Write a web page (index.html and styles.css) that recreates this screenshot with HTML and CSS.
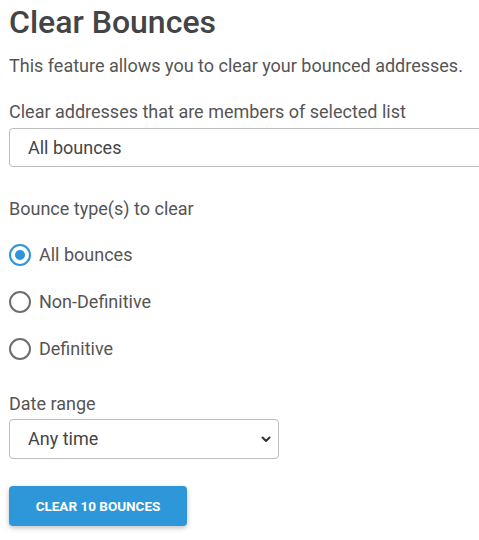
FILE: index.html
```html
<!DOCTYPE html>
<html lang="en">
<head>
<meta charset="utf-8">
<title>Clear Bounces</title>
<link rel="stylesheet" href="styles.css">
</head>
<body>
<div class="page">
  <h1 class="title">Clear Bounces</h1>
  <p class="intro">This feature allows you to clear your bounced addresses.</p>

  <label class="field-label label-list" for="list">Clear addresses that are members of selected list</label>
  <div class="select-wrap select-wide">
    <select id="list" class="select">
      <option>All bounces</option>
    </select>
  </div>

  <div class="field-label label-type">Bounce type(s) to clear</div>
  <div class="radios">
    <label class="radio-row"><input type="radio" name="type" class="radio" checked><span>All bounces</span></label>
    <label class="radio-row"><input type="radio" name="type" class="radio"><span>Non-Definitive</span></label>
    <label class="radio-row"><input type="radio" name="type" class="radio"><span>Definitive</span></label>
  </div>

  <label class="field-label label-date" for="date">Date range</label>
  <div class="select-wrap select-date">
    <select id="date" class="select">
      <option>Any time</option>
    </select>
    <svg class="chevron" width="10" height="7" viewBox="0 0 10 7"><path d="M1.5 1.5 L5 5 L8.5 1.5" fill="none" stroke="#333" stroke-width="2" stroke-linecap="round" stroke-linejoin="round"/></svg>
  </div>

  <button class="btn" type="button">Clear 10 bounces</button>
</div>
</body>
</html>
```

FILE: styles.css
```css
html, body {
  margin: 0;
  padding: 0;
  background: #fff;
}
body {
  font-family: Roboto, "Liberation Sans", Arial, sans-serif;
  color: #555;
  font-size: 18px;
  line-height: 24px;
}
.page {
  overflow: hidden;
  padding-left: 9px;
  padding-bottom: 20px;
}
.title {
  margin: 2px 0 0;
  font-size: 32px;
  line-height: 40px;
  font-weight: 500;
  color: #444;
}
.intro {
  margin: 12px 0 0;
}
.field-label {
  display: block;
}
.label-list { margin-top: 21.5px; }
.label-type { margin-top: 30px; }
.label-date { margin-top: 30.5px; }

.select-wrap {
  position: relative;
}
.select-wide {
  margin-top: 4px;
  width: 520px;
}
.select-date {
  margin-top: 3px;
  width: 270px;
}
.select {
  -webkit-appearance: none;
  appearance: none;
  display: block;
  width: 100%;
  box-sizing: border-box;
  border: 1px solid #bdbdbd;
  border-radius: 4px;
  background: #fff;
  font-family: inherit;
  font-size: 18px;
  color: #444;
  padding: 0 18px;
  outline: none;
}
.select-wide .select { height: 39px; }
.select-date .select { height: 40px; }
.chevron {
  position: absolute;
  right: 8px;
  top: 17px;
}

.radios {
  margin-top: 22.5px;
  display: flex;
  flex-direction: column;
  gap: 23px;
}
.radio-row {
  display: flex;
  align-items: center;
  gap: 8px;
  height: 24px;
  color: #555;
}
.radio {
  -webkit-appearance: none;
  appearance: none;
  margin: 0;
  width: 22px;
  height: 22px;
  border: 2px solid #6e6e6e;
  border-radius: 50%;
  box-sizing: border-box;
  display: grid;
  place-items: center;
  background: #fff;
}
.radio:checked {
  border-color: #2d96d8;
}
.radio:checked::before {
  content: "";
  width: 10px;
  height: 10px;
  border-radius: 50%;
  background: #2d96d8;
}

.btn {
  margin-top: 27px;
  width: 178px;
  height: 40px;
  border: none;
  border-radius: 4px;
  background: #2e97da;
  color: #fff;
  font-family: inherit;
  font-size: 13.5px;
  font-weight: 700;
  text-transform: uppercase;
  box-shadow: 0 2px 5px rgba(0, 0, 0, 0.25);
  cursor: pointer;
}
```
